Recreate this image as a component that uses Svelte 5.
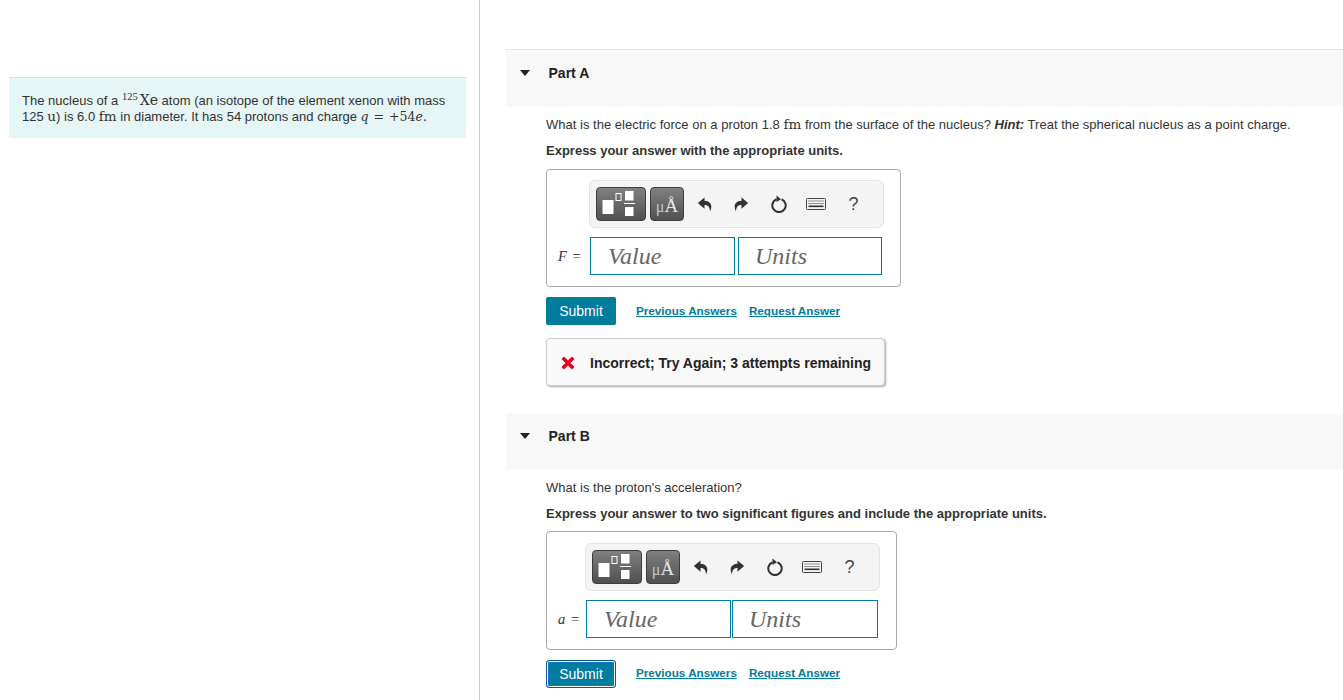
<script>
const parts = [
	{
		name: 'Part A',
		express: 'Express your answer with the appropriate units.',
		symbol: 'F',
		focused: false,
		feedback: true,
	},
	{
		name: 'Part B',
		express: 'Express your answer to two significant figures and include the appropriate units.',
		symbol: 'a',
		focused: true,
		feedback: false,
	},
];
</script>

<div class="page">
	<aside class="left">
		<div class="intro">
			The nucleus of a <sup class="iso">125</sup><span class="rm xe">Xe</span> atom (an isotope of the element xenon with mass
			125 <span class="rm">u</span>) is 6.0 <span class="rm">fm</span> in diameter. It has 54 protons and charge <span class="rm math"><i>q</i> = +54<i>e</i>.</span>
		</div>
	</aside>

	<main class="right">
		{#each parts as part}
			<section class="part">
				<header class="part-head">
					<svg class="caret" width="10" height="6" viewBox="0 0 10 6"><path d="M0 0h10L5 6z" fill="#222" /></svg>
					<h2>{part.name}</h2>
				</header>
				<div class="part-body">
					{#if part.name === 'Part A'}
						<p class="q">What is the electric force on a proton 1.8 <span class="rm">fm</span> from the surface of the nucleus? <b><i>Hint:</i></b> Treat the spherical nucleus as a point charge.</p>
					{:else}
						<p class="q">What is the proton's acceleration?</p>
					{/if}
					<p class="express">{part.express}</p>

					<div class="answer" class:narrow={part.focused}>
						<div class="toolbar">
							<button class="tool tpl" aria-label="templates">
								<svg width="48" height="34" viewBox="0 0 48 34">
									<rect x="6.500" y="13" width="11" height="14" fill="#fff" />
									<rect x="20" y="6.500" width="5" height="7" fill="none" stroke="#fff" />
									<rect x="29" y="4" width="8.500" height="9.500" fill="#fff" />
									<rect x="28" y="16" width="11" height="1" fill="#fff" />
									<rect x="29" y="20" width="8.500" height="9" fill="#fff" />
								</svg>
							</button>
							<button class="tool sym"><span class="mu">μ</span>Å</button>
							<span class="slot first">
								<svg width="15" height="15" viewBox="0.500 1 13 13.500"><path d="M7 1.500 1 6.500l6 5V8.300c3 0 4.600 1.400 5 5.700 2.200-4.500 1.600-9.300-5-9.700z" fill="#333" /></svg>
							</span>
							<span class="slot">
								<svg width="15" height="15" viewBox="2.500 1 13 13.500"><path d="M9 1.500l6 5-6 5V8.300c-3 0-4.600 1.400-5 5.700-2.200-4.500-1.600-9.300 5-9.700z" fill="#333" /></svg>
							</span>
							<span class="slot">
								<svg width="18" height="18" viewBox="0 0 18 18"><path d="M11.500 4.200A6.700 6.700 0 1 1 6.500 4.200" fill="none" stroke="#333" stroke-width="2" /><path d="M6.500 0.500 11 4.300 6.500 7z" fill="#333" /></svg>
							</span>
							<span class="slot">
								<svg width="20" height="12" viewBox="0 0 20 12">
									<rect x="0.500" y="0.500" width="19" height="11" rx="1" fill="#f4f4f4" stroke="#444" />
									<path d="M2.500 3h15M2.500 5.500h15" stroke="#333" stroke-width="1.200" stroke-dasharray="1 1" />
									<path d="M2.500 8.300h15" stroke="#333" stroke-width="1.600" />
								</svg>
							</span>
							<span class="slot help">?</span>
						</div>
						<div class="inputs">
							<span class="lbl"><i>{part.symbol}</i> =</span>
							<input placeholder="Value" />
							<input class="units" placeholder="Units" />
						</div>
					</div>

					<div class="actions" class:focused={part.focused}>
						<button class="submit">Submit</button>
						<a href="#prev">Previous Answers</a>
						<a href="#req">Request Answer</a>
					</div>

					{#if part.feedback}
						<div class="feedback">
							<svg width="14" height="14" viewBox="0 0 14 14"><path d="M0.500 3 3 0.500 7 4.500 11 0.500 13.500 3 9.500 7 13.500 11 11 13.500 7 9.500 3 13.500 0.500 11 4.500 7z" fill="#e2001f" /></svg>
							<span>Incorrect; Try Again; 3 attempts remaining</span>
						</div>
					{/if}
				</div>
			</section>
		{/each}
	</main>
</div>

<style>
:global(body) {
	margin: 0;
}

.page {
	display: flex;
	height: 700px;
	overflow: hidden;
	font-family: 'Liberation Sans', Arial, sans-serif;
	font-size: 13px;
	letter-spacing: 0.010px;
	color: #333;
}

.left {
	box-sizing: border-box;
	width: 480px;
	flex: none;
	padding: 77px 13px 0 9px;
	border-right: 1px solid #ccc;
}

.intro {
	box-sizing: border-box;
	height: 61px;
	padding: 15px 13px 0;
	background: #e6f5f6;
	border-top: 1px solid #d5e3e6;
	line-height: 16px;
}

.iso {
	font-family: 'Liberation Serif', serif;
	font-size: 10.500px;
	line-height: 0;
	vertical-align: 5px;
	margin-right: 2px;
}

.rm {
	font-family: 'DejaVu Serif', serif;
	font-size: 13.500px;
	line-height: 1;
}

.xe {
	font-size: 14px;
}

.math {
	font-size: 12.500px;
	word-spacing: 1px;
}

.right {
	flex: 1;
	padding: 49px 0 0 26px;
	min-width: 0;
}

.part-head {
	box-sizing: border-box;
	height: 58px;
	padding: 15px 0 0 14px;
	display: flex;
	align-items: flex-start;
	background: #f8f8f8;
	border-top: 1px solid #e4e4e4;
}

.part + .part .part-head {
	height: 56px;
	border-top: 0;
}

.caret {
	margin-top: 5px;
}

h2 {
	margin: 0 0 0 18.500px;
	font-size: 14px;
	line-height: 16px;
	color: #222;
}

.part-body {
	padding: 10px 0 0 40px;
}

.part + .part .part-body {
	padding-top: 11px;
}

p {
	margin: 0;
	line-height: 16px;
}

.express {
	margin-top: 10px;
	font-weight: bold;
	letter-spacing: 0;
}

.answer {
	box-sizing: border-box;
	width: 355px;
	height: 118px;
	margin-top: 10px;
	padding: 10px 0 0 11px;
	border: 1px solid #aaa;
	border-radius: 4px;
}

.answer.narrow {
	width: 351px;
	height: 119px;
	margin-top: 9px;
	padding-top: 11px;
}

.toolbar {
	box-sizing: border-box;
	display: flex;
	align-items: center;
	width: 295px;
	height: 48px;
	margin-left: 31px;
	padding-left: 6px;
	background: #f4f4f4;
	border: 1px solid #e4e4e4;
	border-radius: 6px;
}

.narrow .toolbar {
	margin-left: 27px;
}

.tool {
	box-sizing: border-box;
	height: 34px;
	padding: 0;
	border: 1px solid #3d3d3d;
	border-radius: 4px;
	background: linear-gradient(#808080, #505050);
}

.tpl {
	width: 50px;
}

.tpl svg {
	display: block;
	margin: -1px;
}

.sym {
	width: 34px;
	margin-left: 4px;
	padding-top: 3px;
	color: #e4e4e4;
	font-family: 'Liberation Serif', serif;
	font-size: 19px;
}

.mu {
	font-size: 16px;
	color: #c4c4c4;
}

.slot {
	display: flex;
	justify-content: center;
	width: 37.250px;
}

.slot.first {
	margin-left: 2px;
}

.help {
	font-size: 18px;
	color: #444;
}

.inputs {
	display: flex;
	align-items: center;
	margin-top: 9px;
}

.lbl {
	width: 32px;
	flex: none;
	font-family: 'Liberation Serif', serif;
	font-size: 14.500px;
	word-spacing: 2px;
	color: #333;
}

.narrow .lbl {
	width: 28px;
}

input {
	box-sizing: border-box;
	width: 145px;
	height: 38px;
	padding: 0 0 0 17px;
	border: 1px solid #007c9e;
	border-radius: 0;
	outline: 0;
	background: #fff;
	font-family: 'Liberation Serif', serif;
	font-style: italic;
	font-size: 24px;
}

input::placeholder {
	color: #666;
	opacity: 1;
}

.units {
	width: 144px;
	margin-left: 3px;
	padding-left: 16px;
}

.narrow .units {
	width: 146px;
	margin-left: 1px;
}

.actions {
	display: flex;
	align-items: center;
	margin-top: 10px;
}

.submit {
	box-sizing: border-box;
	width: 70px;
	height: 28px;
	padding: 0;
	border: 0;
	border-radius: 2px;
	background: #007c9e;
	color: #fff;
	font-family: inherit;
	font-size: 14px;
}

.focused .submit {
	border: 1px solid #005f85;
	border-radius: 3px;
	box-shadow: inset 0 0 0 1px #fff, inset 0 0 0 2px #1a6fc0;
}

a {
	margin-left: 12px;
	padding-bottom: 2px;
	color: #007c9e;
	font-size: 11.700px;
	font-weight: bold;
	letter-spacing: 0;
	text-decoration: underline;
}

.focused a {
	padding-bottom: 4px;
}

.submit + a {
	margin-left: 20px;
}

.feedback {
	box-sizing: border-box;
	display: flex;
	align-items: center;
	gap: 15px;
	width: 339px;
	height: 48px;
	margin-top: 13px;
	padding: 1px 0 0 14px;
	background: #f9f9f9;
	border: 1px solid #ccc;
	border-radius: 4px;
	box-shadow: 1px 1px 2px #aaa;
	font-size: 14px;
	font-weight: bold;
	letter-spacing: 0;
	color: #222;
}

.part:first-child .part-body {
	padding-bottom: 27px;
}
</style>
